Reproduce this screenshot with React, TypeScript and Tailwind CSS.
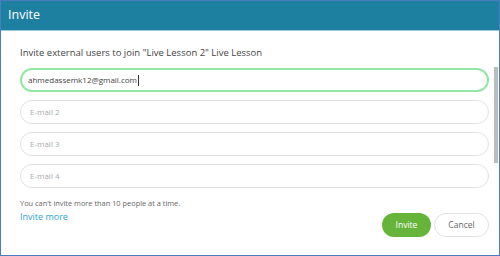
import React from "react";

export default function App() {
  const font = { fontFamily: '"Open Sans", "Liberation Sans", sans-serif' };
  return (
    <div className="w-[500px] h-[256px] bg-white border border-[#4a7cc0] overflow-hidden flex flex-col" style={font}>
      <div className="h-[30px] shrink-0 bg-[#1e80a0] border-b border-[#9cc8d8] flex items-center pl-[7px]">
        <span className="text-white text-[12.5px] leading-none">Invite</span>
      </div>
      <div className="flex flex-1 min-h-0">
        <div className="flex-1 flex flex-col pl-[19px] pr-[5px] pt-[16px]">
          <p className="text-[9.5px] text-[#444] leading-[12px]">Invite external users to join "Live Lesson 2" Live Lesson</p>
          <div className="mt-[9px] flex flex-col gap-[8px]">
            <div className="h-[24px] rounded-full border-2 border-[#94e6a6] flex items-center px-[6px]">
              <span className="text-[8px] text-[#444]">ahmedassemk12@gmail.com</span>
              <span className="w-px h-[11px] bg-[#333] ml-px" />
            </div>
            {["E-mail 2", "E-mail 3", "E-mail 4"].map((p) => (
              <div key={p} className="h-[24px] rounded-full border border-[#e2e2e2] flex items-center px-[9px]">
                <span className="text-[8px] text-[#aaa]">{p}</span>
              </div>
            ))}
          </div>
          <p className="mt-[10px] text-[7.4px] text-[#666] leading-[10px]">You can't invite more than 10 people at a time.</p>
          <div className="flex items-start">
            <span className="text-[9px] text-[#2aa3d0] leading-[12px] mt-[3px]">Invite more</span>
            <div className="ml-auto flex gap-[3px] mt-[5px]">
              <button className="h-[24px] w-[49px] rounded-full bg-[#66b53a] text-white text-[8.5px]">Invite</button>
              <button className="h-[24px] w-[55px] rounded-full bg-white border border-[#e2e2e2] text-[#666] text-[8.5px]">Cancel</button>
            </div>
          </div>
        </div>
        <div className="w-[5px] shrink-0 pt-[36px] pr-px">
          <div className="w-[4px] h-[96px] bg-[#bcbcbc]" />
        </div>
      </div>
    </div>
  );
}
